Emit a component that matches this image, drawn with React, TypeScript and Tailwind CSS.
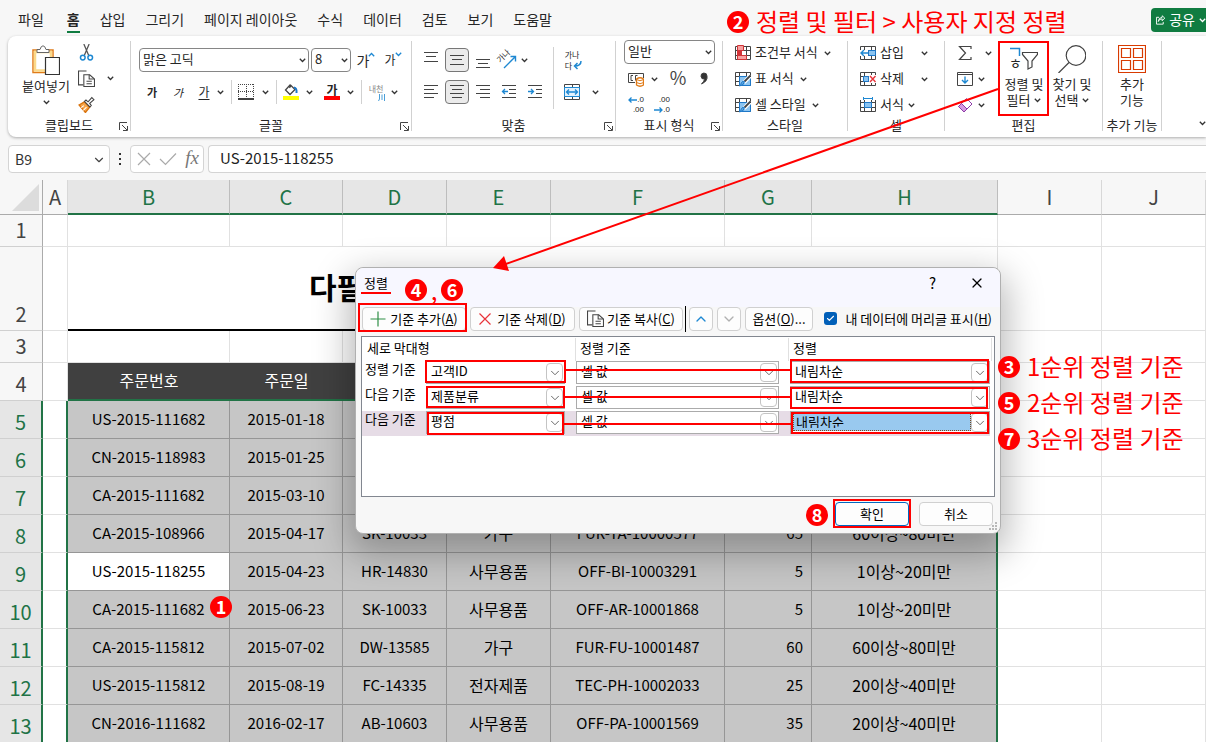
import React from 'react';
import { ChevronDown, ChevronUp, Check, X } from 'lucide-react';

const tabs = ['파일', '홈', '삽입', '그리기', '페이지 레이아웃', '수식', '데이터', '검토', '보기', '도움말'];

const columns = [
  { name: 'A', width: 'w-[25px]' },
  { name: 'B', width: 'w-[162px]' },
  { name: 'C', width: 'w-[113px]' },
  { name: 'D', width: 'w-[104px]' },
  { name: 'E', width: 'w-[104px]' },
  { name: 'F', width: 'w-[174px]' },
  { name: 'G', width: 'w-[87px]' },
  { name: 'H', width: 'w-[186px]' },
  { name: 'I', width: 'w-[104px]' },
  { name: 'J', width: '' },
];

const orders = [
  { row: 5, cells: ['US-2015-111682', '2015-01-18', '', '', '', '', ''] },
  { row: 6, cells: ['CN-2015-118983', '2015-01-25', '', '', '', '', ''] },
  { row: 7, cells: ['CA-2015-111682', '2015-03-10', '', '', '', '', ''] },
  { row: 8, cells: ['CA-2015-108966', '2015-04-17', 'SK-10033', '가구', 'FUR-TA-10000577', '65', '60이상~80미만'] },
  { row: 9, cells: ['US-2015-118255', '2015-04-23', 'HR-14830', '사무용품', 'OFF-BI-10003291', '5', '1이상~20미만'] },
  { row: 10, cells: ['CA-2015-111682', '2015-06-23', 'SK-10033', '사무용품', 'OFF-AR-10001868', '5', '1이상~20미만'] },
  { row: 11, cells: ['CA-2015-115812', '2015-07-02', 'DW-13585', '가구', 'FUR-FU-10001487', '60', '60이상~80미만'] },
  { row: 12, cells: ['US-2015-115812', '2015-08-19', 'FC-14335', '전자제품', 'TEC-PH-10002033', '25', '20이상~40미만'] },
  { row: 13, cells: ['CN-2016-111682', '2016-02-17', 'AB-10603', '사무용품', 'OFF-PA-10001569', '35', '20이상~40미만'] },
];

const sortLevels = [
  { label: '정렬 기준', field: '고객ID', on: '셀 값', order: '내림차순', active: false },
  { label: '다음 기준', field: '제품분류', on: '셀 값', order: '내림차순', active: false },
  { label: '다음 기준', field: '평점', on: '셀 값', order: '내림차순', active: true },
];

type Children = { children?: React.ReactNode; className?: string };

function Caret({ className = '', color = '#333' }: { className?: string; color?: string }) {
  return (
    <svg viewBox="0 0 7 5" className={`h-[5px] w-[7px] shrink-0 ${className}`} fill="none" stroke={color} strokeWidth="1.3">
      <path d="M0.8 0.8 3.5 3.5 6.2 0.8" />
    </svg>
  );
}

function Icon({ children, className = 'size-4' }: Children) {
  return (
    <svg viewBox="0 0 16 16" className={`shrink-0 ${className}`} fill="none" stroke="#444" strokeWidth="1">
      {children}
    </svg>
  );
}

function Tool({ label, children, className = '' }: Children & { label: string }) {
  return (
    <button type="button" aria-label={label} className={`flex shrink-0 items-center justify-center ${className}`}>
      {children}
    </button>
  );
}

function Group({ title, launcher, children, className = '' }: Children & { title: string; launcher?: boolean }) {
  return (
    <>
      <section className={`flex h-[94px] shrink-0 flex-col ${className}`}>
        <div className="flex h-[76px] items-start">{children}</div>
        <div className="relative h-4 text-center leading-4 whitespace-nowrap">
          {title}
          {launcher && (
            <button type="button" aria-label={`${title} 설정`} className="absolute top-[5px] right-0.5">
              <svg viewBox="0 0 9 9" className="size-[9px]" fill="none" stroke="#444">
                <path d="M0.5 8V0.5H8M3 3 8 8M8.5 4V8.5H4" />
              </svg>
            </button>
          )}
        </div>
      </section>
      <div className="h-[90px] w-px shrink-0 bg-[#d1d1d1]" />
    </>
  );
}

function Lines({ rows }: { rows: [number, number, number][] }) {
  return (
    <Icon>
      {rows.map(([y, from, to]) => (
        <path key={y} d={`M${from} ${y}.5H${to}`} />
      ))}
    </Icon>
  );
}

function CopyIcon() {
  return (
    <Icon className="size-[17px]">
      <path d="M5 14H0.5V1H8" />
      <path d="M5.5 4.5H11L15.5 8.5V15.5H5.5Z" fill="#fff" />
      <path d="M10.5 4.5V8.5H15M8 10.5H13M8 13H13" />
    </Icon>
  );
}

function ClipboardGroup() {
  return (
    <Group title="클립보드" launcher className="w-[122px]">
      <button type="button" className="ml-3 flex w-[52px] flex-col items-center pt-1">
        <svg viewBox="0 0 28 30" className="h-[30px] w-7" fill="none">
          <path d="M1 5H21V27.500H1Z" fill="#fff" stroke="#e07b18" strokeWidth="1.5" />
          <path d="M3 7H19V25.500H3Z" stroke="#fbd98a" strokeWidth="2.500" />
          <path d="M5 7.500V4.500H8Q9 0.800 11 0.800T14 4.500H17V7.500Z" fill="#fff" stroke="#666" />
          <path d="M13.500 12.500H27.500V29.500H13.500Z" fill="#fff" stroke="#333" strokeWidth="1.2" />
        </svg>
        <span className="mt-[3px] leading-4 whitespace-nowrap">붙여넣기</span>
        <Caret className="mt-1.5" />
      </button>
      <div className="ml-1.5 flex flex-col gap-[9px] pt-[3px]">
        <Tool label="잘라내기" className="size-[17px]">
          <Icon className="size-[17px]">
            <path d="M5.5 0 10 10.5M10.5 0 6 10.5" stroke="#555" strokeWidth="1.200" />
            <circle cx="4.5" cy="12.8" r="2.2" stroke="#1e88d2" strokeWidth="1.4" />
            <circle cx="11.5" cy="12.8" r="2.2" stroke="#1e88d2" strokeWidth="1.4" />
          </Icon>
        </Tool>
        <div className="flex items-center gap-3">
          <Tool label="복사" className="size-[17px]">
            <CopyIcon />
          </Tool>
          <Caret />
        </div>
        <Tool label="서식 복사" className="size-[17px]">
          <Icon className="size-[17px]">
            <path d="M1 8.5 6 5.5 11 10.5 7 15.5Z" fill="#f7a54a" stroke="#d9730d" strokeWidth="1.300" />
            <path d="M3 11 5.5 9M5 13.5 8 10.5" stroke="#fff" />
            <path d="M6 5 7.5 3.8 9.5 5.5 13 1.5 15 3.5 11 7 12.5 9 11.2 10.3Z" fill="#fff" stroke="#444" />
          </Icon>
        </Tool>
      </div>
    </Group>
  );
}

function RibbonSelect({ label, value, className = '' }: { label: string; value: string; className?: string }) {
  return (
    <div className={`relative shrink-0 ${className}`}>
      <select aria-label={label} className="block h-6 w-full appearance-none rounded border border-[#868686] bg-white pb-0.5 pl-[3px] leading-5">
        <option>{value}</option>
      </select>
      <Caret className="pointer-events-none absolute top-[10px] right-[3px]" />
    </div>
  );
}

function FontGroup() {
  return (
    <Group title="글꼴" launcher className="w-[280px]">
      <div className="flex flex-col pl-2">
        <div className="mt-[7px] flex h-6 items-center">
          <RibbonSelect label="글꼴 이름" value="맑은 고딕" className="w-[170px]" />
          <RibbonSelect label="글꼴 크기" value="8" className="ml-0.5 w-10" />
          <Tool label="글꼴 크게" className="ml-1.5 w-[18px] text-[14px]">
            가<Caret className="-mt-3 -ml-px rotate-180" color="#1e88d2" />
          </Tool>
          <Tool label="글꼴 작게" className="ml-2.5 w-[16px] text-[12px]">
            가<Caret className="-mt-3 -ml-px" color="#1e88d2" />
          </Tool>
        </div>
        <div className="mt-2 flex h-6 items-center">
          <Tool label="굵게" className="w-[26px] text-[11px] font-bold">가</Tool>
          <Tool label="기울임꼴" className="w-[26px] text-[11px] italic">가</Tool>
          <Tool label="밑줄" className="w-[26px] text-[12px] underline underline-offset-2">가</Tool>
          <Caret />
          <div className="ml-[7px] h-6 w-px bg-[#d1d1d1]" />
          <Tool label="테두리" className="ml-1.5 w-4">
            <Icon>
              <path d="M0.5 0V13M15.5 0V13M8.500 0V13M0 0.5H16M0 7.500H16" strokeDasharray="1 1" />
              <path d="M0 15H16" stroke="#000" strokeWidth="1.5" />
            </Icon>
          </Tool>
          <Caret className="ml-2" />
          <div className="ml-[7px] h-6 w-px bg-[#d1d1d1]" />
          <Tool label="채우기 색" className="ml-1.5 w-4">
            <Icon>
              <path d="M7.500 0.500 2.500 6 7 10.500 12 5.500 8 1.500 6.500 4" strokeWidth="1.300" />
              <path d="M11 3.500Q14 4 13.500 9" stroke="#1e78c8" strokeWidth="2" />
              <path d="M0 14H16" stroke="#ff0" strokeWidth="4" />
            </Icon>
          </Tool>
          <Caret className="ml-[7px]" />
          <Tool label="글꼴 색" className="ml-[11px] w-4 flex-col">
            <span className="h-3 text-[12px] leading-3 font-bold">가</span>
            <span className="h-1 w-4 bg-[#f00]" />
          </Tool>
          <Caret className="ml-[7px]" />
          <div className="ml-[7px] h-6 w-px bg-[#d1d1d1]" />
          <Tool label="윗주" className="ml-[5px] w-[18px] flex-col text-[8px] leading-[11px] text-[#888]">
            <span className="whitespace-nowrap">내천</span>
            <svg viewBox="0 0 7 7" className="size-[7px] self-end" fill="none" stroke="#4a9fd8">
              <path d="M1.5 0V5L0.5 7M4 0.500V6M6.500 0V7" />
            </svg>
          </Tool>
          <Caret className="ml-1.5" />
        </div>
      </div>
    </Group>
  );
}

function AlignGroup() {
  const pressed = 'size-6 rounded border border-[#777] bg-[#ebebeb]';
  return (
    <Group title="맞춤" launcher className="w-[203px]">
      <div className="flex flex-col gap-2 pt-[7px] pl-[5px]">
        <div className="flex h-6 items-center">
          <Tool label="위쪽 맞춤" className="w-7">
            <Lines rows={[[0, 1, 15], [4, 3, 13], [9, 1, 15]]} />
          </Tool>
          <Tool label="가운데 맞춤" className={pressed}>
            <Lines rows={[[3, 1, 15], [7, 3, 13], [12, 1, 15]]} />
          </Tool>
          <Tool label="아래쪽 맞춤" className="w-7">
            <Lines rows={[[7, 1, 15], [11, 3, 13], [15, 1, 15]]} />
          </Tool>
          <Tool label="방향" className="relative h-6 w-6">
            <span className="absolute top-0 -left-px -rotate-45 text-[8px] leading-4">가나</span>
            <svg viewBox="0 0 18 16" className="mt-1 h-4 w-[18px]" fill="none" stroke="#1e88d2" strokeWidth="1.4">
              <path d="M4 14 15 3M10.500 2.500H15.500V7.500" />
            </svg>
          </Tool>
          <Caret />
        </div>
        <div className="flex h-6 items-center">
          <Tool label="왼쪽 맞춤" className="w-7">
            <Lines rows={[[1, 1, 15], [5, 1, 11], [9, 1, 15], [13, 1, 11]]} />
          </Tool>
          <Tool label="가로 가운데 맞춤" className={pressed}>
            <Lines rows={[[1, 1, 15], [5, 3, 13], [9, 1, 15], [13, 3, 13]]} />
          </Tool>
          <Tool label="오른쪽 맞춤" className="w-7">
            <Lines rows={[[1, 1, 15], [5, 5, 15], [9, 1, 15], [13, 5, 15]]} />
          </Tool>
          <Tool label="내어쓰기" className="w-6">
            <Icon>
              <path d="M1 1.5H15M8 5.500H15M8 9.500H15M1 13.500H15" />
              <path d="M7 7.500H1.500M4 5 1.500 7.500 4 10" stroke="#1e88d2" strokeWidth="1.3" />
            </Icon>
          </Tool>
          <Tool label="들여쓰기" className="w-7">
            <Icon>
              <path d="M1 1.5H15M9 5.500H15M9 9.500H15M1 13.500H15" />
              <path d="M1 7.500H6.500M4 5 6.500 7.500 4 10" stroke="#1e88d2" strokeWidth="1.3" />
            </Icon>
          </Tool>
        </div>
      </div>
      <div className="mt-1.5 ml-1 h-[62px] w-px shrink-0 bg-[#d1d1d1]" />
      <div className="flex flex-col gap-2 pt-[7px] pl-2">
        <Tool label="텍스트 줄 바꿈" className="relative h-6 w-5">
          <span className="text-left text-[8px] leading-[11px]">가나<br />다</span>
          <svg viewBox="0 0 9 9" className="absolute right-0 bottom-0.5 size-[9px]" fill="none" stroke="#1e88d2" strokeWidth="1.5">
            <path d="M8 0Q8 5 1.5 5M4.5 2 1.5 5 4.5 8" />
          </svg>
        </Tool>
        <div className="flex h-6 items-center">
          <Tool label="병합하고 가운데 맞춤" className="w-5">
            <Icon>
              <path d="M0.5 0.5H15.5V15.5H0.5ZM8.500 0.5V3.5M8.500 12.5V15.5" />
              <path d="M0.5 3.5H15.5V12.5H0.5Z" fill="#e3f1fc" stroke="#1e88d2" />
              <path d="M3 8H13M5 5.5 2.5 8 5 10.5M11 5.5 13.5 8 11 10.5" stroke="#1e88d2" strokeWidth="1.3" />
            </Icon>
          </Tool>
          <Caret className="ml-2.5" />
        </div>
      </div>
    </Group>
  );
}

function NumberGroup() {
  const decimals = "relative w-4 flex-col text-right font-['Liberation_Sans',sans-serif] text-[8px] leading-[10px]";
  return (
    <Group title="표시 형식" launcher className="w-[106px]">
      <div className="flex flex-col pl-2">
        <RibbonSelect label="표시 형식" value="일반" className="-mt-px w-[91px]" />
        <div className="mt-[3px] flex h-6 items-center">
          <Tool label="회계 표시 형식" className="ml-1 w-4">
            <Icon>
              <path d="M15.500 7V2.5H0.5V11.5H7M5 4.500H3V9.500H5M9.500 4.500H7.500V9.500" />
              <path d="M8.5 8Q12 5.500 15.5 8V14Q12 16.5 8.5 14Z" fill="#fff" stroke="#e07b18" strokeWidth="1.3" />
              <path d="M8.5 8.500Q12 11 15.5 8.500M8.5 11.500Q12 14 15.5 11.500" stroke="#e07b18" />
            </Icon>
          </Tool>
          <Caret className="ml-[7px]" />
          <Tool label="백분율 스타일" className="ml-3 w-4 pb-1 text-[18px] leading-5 text-[#444]">%</Tool>
          <Tool label="쉼표 스타일" className="ml-2.5 w-4">
            <Icon>
              <path d="M11 5Q12 10 5.5 13 8.5 10 8.5 8A3 3 0 1 1 11 5Z" fill="#333" />
            </Icon>
          </Tool>
        </div>
        <div className="mt-0.5 flex h-6 items-center gap-2.5 pl-1">
          <Tool label="자릿수 늘림" className={decimals}>
            <span className="w-full">.0</span>
            <span className="w-full">.00</span>
            <svg viewBox="0 0 9 6" className="absolute top-0.5 left-0 h-1.5 w-[9px]" fill="none" stroke="#1e88d2" strokeWidth="1.3">
              <path d="M9 3H1M3.5 0.5 1 3 3.5 5.5" />
            </svg>
          </Tool>
          <Tool label="자릿수 줄임" className={decimals}>
            <span className="w-full">.00</span>
            <span className="w-full">.0</span>
            <svg viewBox="0 0 9 6" className="absolute bottom-0.5 left-0 h-1.5 w-[9px]" fill="none" stroke="#1e88d2" strokeWidth="1.3">
              <path d="M0 3H8M5.5 0.5 8 3 5.5 5.5" />
            </svg>
          </Tool>
        </div>
      </div>
    </Group>
  );
}

function GridIcon({ children }: Children) {
  return (
    <Icon>
      <path d="M0.5 1.5H15.5V14.5H0.5ZM0.5 5.5H15.5M0.5 10.5H15.5M4.5 1.5V14.5M11.5 1.5V14.5" />
      {children}
    </Icon>
  );
}

function Brush() {
  return (
    <>
      <path d="M4.5 5.5H15.5V14.5H4.5Z" fill="#8cc4f0" stroke="#1e78c8" />
      <path d="M15.5 4.5 9 11.5" stroke="#fff" strokeWidth="4" />
      <path d="M15.5 4.5 9.5 10.5" stroke="#444" strokeWidth="1.8" />
      <path d="M9.5 10.5Q9 14.5 4.5 15 6 13.5 6.5 11.5 8 9.5 9.5 10.5Z" fill="#5ba7e0" stroke="#1e78c8" />
    </>
  );
}

function StyleGroup() {
  const items = [
    {
      text: '조건부 서식',
      art: (
        <>
          <path d="M2.500 0.500H8.500V5.500H2.500ZM2.500 10.500H11.500V14.500H2.500Z" fill="#f7a0a0" stroke="#d13438" />
          <path d="M2.500 5.500H6.500V10.500H2.500Z" fill="#d13438" stroke="#d13438" />
          <path d="M7.500 6H11V10H7.500Z" fill="#fff" stroke="none" />
        </>
      ),
    },
    { text: '표 서식', art: <Brush /> },
    { text: '셀 스타일', art: <Brush /> },
  ];
  return (
    <Group title="스타일" className="w-[124px]">
      <div className="flex flex-col gap-0.5 pl-3">
        {items.map((item) => (
          <button key={item.text} type="button" className="flex h-6 items-center">
            <GridIcon>{item.art}</GridIcon>
            <span className="ml-1 pb-0.5 whitespace-nowrap">{item.text}</span>
            <Caret className="ml-1.5" />
          </button>
        ))}
      </div>
    </Group>
  );
}

function CellGroup() {
  const items = [
    {
      text: '삽입',
      caret: 'ml-[17px]',
      art: (
        <>
          <path d="M0 5H8V11H0Z" fill="#fff" stroke="none" />
          <path d="M8.5 5.5H15.5V10.5H8.5Z" fill="#8cc4f0" stroke="#1e78c8" />
          <path d="M8 8H1M4 5 1 8 4 11" stroke="#1e88d2" strokeWidth="1.4" />
        </>
      ),
    },
    {
      text: '삭제',
      caret: 'ml-[17px]',
      art: (
        <>
          <path d="M9 4H16V12H9Z" fill="#fff" stroke="none" />
          <path d="M3.5 5.5H8.5V10.5H3.5Z" fill="#8cc4f0" stroke="#1e78c8" />
          <path d="M10 5 15.5 11M15.5 5 10 11" stroke="#e8333a" strokeWidth="1.4" />
        </>
      ),
    },
    {
      text: '서식',
      caret: 'ml-1',
      art: (
        <>
          <path d="M4.5 5.5H11.5V10.5H4.5Z" fill="#8cc4f0" stroke="#1e78c8" />
          <path d="M0 0H16V3H0Z" fill="#fff" stroke="none" />
          <path d="M3.500 1.500H12.500M3.500 0V3M12.500 0V3" stroke="#1e88d2" />
        </>
      ),
    },
  ];
  return (
    <Group title="셀" className="w-[96px]">
      <div className="flex flex-col gap-0.5 pl-3">
        {items.map((item) => (
          <button key={item.text} type="button" className="flex h-6 items-center">
            <GridIcon>{item.art}</GridIcon>
            <span className="ml-1 pb-0.5 whitespace-nowrap">{item.text}</span>
            <Caret className={item.caret} />
          </button>
        ))}
      </div>
    </Group>
  );
}

function EditGroup() {
  return (
    <Group title="편집" className="w-[157px]">
      <div className="flex flex-col gap-0.5 pl-3">
        <button type="button" aria-label="자동 합계" className="flex h-6 items-center">
          <Icon>
            <path d="M14 4V1.5H2.5L8.5 8 2.5 14.5H14V12" strokeWidth="1.2" />
          </Icon>
          <Caret className="ml-3" />
        </button>
        <button type="button" aria-label="채우기" className="flex h-6 items-center">
          <Icon>
            <path d="M0.5 1.5H15.5V14.5H0.5ZM0.5 3.500H15.5" />
            <path d="M8 5.5V12M5 9 8 12 11 9" stroke="#1e88d2" strokeWidth="1.4" />
          </Icon>
          <Caret className="ml-[5px]" />
        </button>
        <button type="button" aria-label="지우기" className="flex h-6 items-center">
          <Icon>
            <path d="M9.5 1.5 15 7 7 15 1.5 9.5Z" stroke="#8e3ba8" fill="#fff" />
            <path d="M4.5 6.5 10 12 7 15 1.5 9.5Z" fill="#d59ae0" stroke="#8e3ba8" />
          </Icon>
          <Caret className="ml-[5px]" />
        </button>
      </div>
      <button type="button" className="ml-[7px] flex w-[50px] flex-col items-center pt-1.5">
        <div className="relative h-[26px] w-7">
          <svg viewBox="0 0 28 26" className="h-[26px] w-7" fill="none">
            <path d="M0 1.5H9.5V9" stroke="#1e88d2" strokeWidth="1.5" />
            <path d="M12.5 5.5H27.5V7.5L22 14V20L18 22V14L12.5 7.5Z" stroke="#444" strokeWidth="1.2" />
          </svg>
          <span className="absolute top-2.5 -left-px text-[14px] leading-[13px]">ㅎ</span>
        </div>
        <span className="mt-[3px] text-center leading-4 whitespace-nowrap">정렬 및</span>
        <span className="flex items-center gap-1 leading-4">필터 <Caret /></span>
      </button>
      <button type="button" className="flex w-[46px] flex-col items-center pt-1">
        <svg viewBox="0 0 28 28" className="size-7" fill="none" stroke="#444" strokeWidth="1.2">
          <circle cx="18" cy="10.5" r="9.8" />
          <path d="M11 17.5 0.5 28" />
        </svg>
        <span className="mt-[3px] text-center leading-4 whitespace-nowrap">찾기 및</span>
        <span className="flex items-center gap-1 leading-4">선택 <Caret /></span>
      </button>
    </Group>
  );
}

function Ribbon() {
  return (
    <div className="ml-2 flex h-[101px] shrink-0 items-start overflow-hidden rounded-l-lg bg-white pt-[5px] text-[13px] text-[#262626] shadow-[0_1px_3px_rgba(0,0,0,0.3)]">
      <ClipboardGroup />
      <FontGroup />
      <AlignGroup />
      <NumberGroup />
      <StyleGroup />
      <CellGroup />
      <EditGroup />
      <Group title="추가 기능" className="w-[58px]">
        <button type="button" className="flex w-full flex-col items-center pt-1">
          <svg viewBox="0 0 28 28" className="size-7" fill="none" stroke="#d83b01" strokeWidth="1.2">
            <path d="M0.5 0.5H27.5V27.5H0.5ZM3.5 3.5H12.5V12.5H3.5ZM15.5 3.5H24.5V12.5H15.5ZM3.5 15.5H12.5V24.5H3.5ZM15.5 15.5H24.5V24.5H15.5Z" />
          </svg>
          <span className="mt-[3px] leading-4">추가</span>
          <span className="leading-4">기능</span>
        </button>
      </Group>
      <button type="button" aria-label="리본 메뉴 접기" className="mt-20 ml-auto">
        <Caret />
      </button>
    </div>
  );
}

function FormulaBar() {
  return (
    <div className="mt-2 flex h-7 shrink-0 items-stretch">
      <div className="relative ml-2 w-[102px]">
        <input aria-label="이름 상자" defaultValue="B9" className="h-full w-full rounded border border-[#d4d4d4] bg-white pl-1.5 text-[14px] text-[#333]" />
        <ChevronDown className="pointer-events-none absolute top-2 right-1 size-3.5 text-[#444]" strokeWidth={2} />
      </div>
      <div className="flex w-5 flex-col items-center justify-center gap-[3px]">
        <span className="size-0.5 bg-[#333]" />
        <span className="size-0.5 bg-[#333]" />
        <span className="size-0.5 bg-[#333]" />
      </div>
      <div className="flex w-[74px] items-center justify-between rounded border border-[#d4d4d4] bg-white px-1 text-[#aaa]">
        <Tool label="취소">
          <svg viewBox="0 0 14 14" className="ml-0.5 size-3.5" fill="none" stroke="currentColor" strokeWidth="1.2">
            <path d="M1 1 13 13M13 1 1 13" />
          </svg>
        </Tool>
        <Tool label="입력">
          <svg viewBox="0 0 18 14" className="h-3.5 w-[18px]" fill="none" stroke="currentColor" strokeWidth="1.2">
            <path d="M1 7 6.500 12.500 17 1.500" />
          </svg>
        </Tool>
        <Tool label="함수 삽입" className="pb-0.5 font-['Liberation_Serif',serif] text-[19px] leading-5 text-[#777] italic">fx</Tool>
      </div>
      <input aria-label="수식 입력줄" defaultValue="US-2015-118255" className="ml-1 min-w-0 flex-1 rounded-l border border-r-0 border-[#d4d4d4] bg-white pb-0.5 pl-[11px] text-[15px] text-[#222]" />
    </div>
  );
}

function RowNumber({ n, selected }: { n: number; selected?: boolean }) {
  return (
    <th
      scope="row"
      className={`border-b border-b-[#d0d0d0] p-0 pb-0.5 align-bottom text-[20px] leading-[29px] font-normal ${selected ? 'border-r-2 border-r-[#217346] bg-[#e6e6e6] text-[#217346]' : 'border-r border-r-[#ababab] bg-[#f7f7f7] text-[#444]'}`}
    >
      {n}
    </th>
  );
}

const gridCell = 'border-r border-b border-[#e1e1e1] bg-white';

function BlankRow({ n }: { n: number }) {
  return (
    <tr className="h-8">
      <RowNumber n={n} />
      {columns.map((col) => (
        <td key={col.name} className={gridCell} />
      ))}
    </tr>
  );
}

function Sheet() {
  return (
    <table className="mt-[7px] w-full shrink-0 table-fixed border-separate border-spacing-0 text-black">
      <colgroup>
        <col className="w-[43px]" />
        {columns.map((col) => (
          <col key={col.name} className={col.width} />
        ))}
      </colgroup>
      <thead>
        <tr className="h-[35px]">
          <td className="border-r border-b border-[#ababab] bg-[#f7f7f7] p-0">
            <svg viewBox="0 0 27 27" className="ml-3 size-[27px]">
              <path d="M27 0V27H0Z" fill="#dcdcdc" />
            </svg>
          </td>
          {columns.map((col, i) => (
            <th
              key={col.name}
              scope="col"
              className={`border-r p-0 text-[20px] leading-8 font-normal ${i > 0 && i < 8 ? 'border-b-2 border-r-[#bdbdbd] border-b-[#217346] bg-[#e6e6e6] text-[#217346]' : 'border-b border-r-[#d8d8d8] border-b-[#ababab] bg-[#f7f7f7] text-[#444]'}`}
            >
              {col.name}
            </th>
          ))}
        </tr>
      </thead>
      <tbody>
        <BlankRow n={1} />
        <tr className="h-[84px]">
          <RowNumber n={2} />
          <td className={gridCell} />
          <td colSpan={7} className="border-r border-b-2 border-r-[#e1e1e1] border-b-black bg-white p-0 pb-1 pl-[241px] text-[30px] leading-10 font-bold">
            다필
          </td>
          <td className={gridCell} />
          <td className={gridCell} />
        </tr>
        <BlankRow n={3} />
        <tr className="h-[38px]">
          <RowNumber n={4} />
          <td className={gridCell} />
          {['주문번호', '주문일', '', '', '', '', ''].map((name, i) => (
            <td key={i} className="border-b-2 border-[#217346] bg-[#404040] p-0 pb-0.5 text-center text-[16px] leading-6 text-white">
              {name}
            </td>
          ))}
          <td className={gridCell} />
          <td className={gridCell} />
        </tr>
        {orders.map((order) => (
          <tr key={order.row} className="h-[38px]">
            <RowNumber n={order.row} selected />
            <td className="border-r-2 border-b border-r-[#217346] border-b-[#e1e1e1] bg-white" />
            {order.cells.map((cell, i) => (
              <td
                key={i}
                className={`border-b border-b-[#969696] p-0 pb-0.5 leading-6 ${i === 6 ? 'border-r-2 border-r-[#217346]' : 'border-r border-r-[#969696]'} ${order.row === 9 && i === 0 ? 'bg-white' : 'bg-[#c6c6c6]'} ${i === 5 ? 'pr-2 text-right' : 'text-center'} ${i === 3 || i === 6 ? 'text-[16px]' : 'text-[15px]'}`}
              >
                {cell}
              </td>
            ))}
            <td className={gridCell} />
            <td className={gridCell} />
          </tr>
        ))}
      </tbody>
    </table>
  );
}

function DialogButton({ children, className = '', primary }: Children & { primary?: boolean }) {
  return (
    <button
      type="button"
      className={`flex h-6 shrink-0 items-center justify-center rounded border bg-[#fdfdfd] pb-px whitespace-nowrap ${primary ? 'border-[#0067c0]' : 'border-[#d0d0d0]'} ${className}`}
    >
      {children}
    </button>
  );
}

function LevelSelect({ label, value, active, className = '' }: { label: string; value: string; active?: boolean; className?: string }) {
  return (
    <div className={`relative h-[23px] shrink-0 border border-[#ababab] bg-white px-0.5 pt-px ${className}`}>
      <select
        aria-label={label}
        className={`block h-[18px] appearance-none pb-0.5 pl-0.5 leading-4 ${active ? 'w-[178px] border border-dotted border-[#7a4a20] bg-[#99c9ef]' : 'w-full bg-white'}`}
      >
        <option>{value}</option>
      </select>
      <span className="pointer-events-none absolute inset-y-px right-px flex w-[17px] items-center justify-center rounded-sm border border-[#c4c4c4] bg-white">
        <ChevronDown className="size-3.5 shrink-0 text-[#555]" strokeWidth={1.5} />
      </span>
    </div>
  );
}

function SortDialog() {
  return (
    <div role="dialog" aria-label="정렬" className="absolute top-[267px] left-[355px] flex h-[267px] w-[646px] flex-col rounded-lg border border-[#b0b0b0] bg-[#f7f7f7] text-[13px] text-black shadow-[0_14px_36px_6px_rgba(0,0,0,0.28)]">
      <div className="flex h-[30px] items-center rounded-t-lg bg-[#f7f7ff] pr-[15px] pl-2">
        <span className="-mx-[3px] border-b-2 border-[#f00] px-[3px] leading-[19px]">정렬</span>
        <button type="button" aria-label="도움말" className="ml-auto text-[15px]">?</button>
        <button type="button" aria-label="닫기" className="ml-[33px]">
          <X className="size-4" strokeWidth={1.8} />
        </button>
      </div>
      <div className="h-[9px] bg-[#f7f7ff]" />
      <div className="flex h-6 items-center pr-2 pl-1.5">
        <DialogButton className="w-[104px] gap-1">
          <svg viewBox="0 0 16 16" className="size-4" stroke="#2f8f46" strokeWidth="1.2">
            <path d="M8 0.5V15.5M0.5 8H15.5" />
          </svg>
          <span>기준 추가(<u>A</u>)</span>
        </DialogButton>
        <DialogButton className="ml-1 w-[105px] gap-1.5">
          <svg viewBox="0 0 12 12" className="size-3" stroke="#e8333a" strokeWidth="1.2">
            <path d="M0.5 0.5 11.5 11.5M11.5 0.5 0.5 11.5" />
          </svg>
          <span>기준 삭제(<u>D</u>)</span>
        </DialogButton>
        <DialogButton className="ml-1 w-[104px] gap-[3px]">
          <CopyIcon />
          <span>기준 복사(<u>C</u>)</span>
        </DialogButton>
        <div className="mx-0.5 h-[26px] w-px bg-black" />
        <DialogButton className="ml-px w-6"><ChevronUp className="size-4 text-[#1e88d2]" strokeWidth={2} /></DialogButton>
        <DialogButton className="ml-1 w-6"><ChevronDown className="size-4 text-[#b0b0b0]" strokeWidth={2} /></DialogButton>
        <DialogButton className="ml-1 w-[68px]"><span>옵션(<u>O</u>)...</span></DialogButton>
        <label className="ml-auto flex items-center gap-2 pb-px whitespace-nowrap">
          <span className="relative size-[13px]">
            <input type="checkbox" defaultChecked className="block size-[13px] appearance-none rounded-[3px] bg-[#005fb8]" />
            <Check className="pointer-events-none absolute inset-0.5 size-[9px] text-white" strokeWidth={3} />
          </span>
          <span>내 데이터에 머리글 표시(<u>H</u>)</span>
        </label>
      </div>
      <div className="mx-[5px] mt-[5px] h-[161px] border border-[#828790] bg-white">
        <div className="flex h-6 pt-px leading-5">
          <div className="w-[214px] border-r border-[#e0e0e0] pl-[5px]">세로 막대형</div>
          <div className="w-[213px] border-r border-[#e0e0e0] pl-1">정렬 기준</div>
          <div className="w-[203px] border-r border-[#e0e0e0] pl-1">정렬</div>
        </div>
        {sortLevels.map((level, i) => (
          <div key={i} className={`mr-1 flex h-[25px] items-start pl-[3px] ${level.active ? 'bg-[#e6dce6]' : ''}`}>
            <span className="w-[62px] leading-[15px]">{level.label}</span>
            <LevelSelect label={`${i + 1}번째 열`} value={level.field} className="w-[139px]" />
            <LevelSelect label={`${i + 1}번째 정렬 기준`} value={level.on} className="ml-[11px] w-[203px]" />
            <LevelSelect label={`${i + 1}번째 정렬 순서`} value={level.order} active={level.active} className="ml-[11px] w-[200px]" />
          </div>
        ))}
      </div>
      <div className="mt-[5px] flex justify-end gap-2.5 pr-[7px]">
        <DialogButton primary className="w-[74px]">확인</DialogButton>
        <DialogButton className="w-[74px]">취소</DialogButton>
      </div>
      <svg viewBox="0 0 9 9" className="absolute right-0.5 bottom-0.5 size-[9px]" fill="#b8b8b8">
        <path d="M6 0H8V2H6ZM3 3H5V5H3ZM6 3H8V5H6ZM0 6H2V8H0ZM3 6H5V8H3ZM6 6H8V8H6Z" />
      </svg>
    </div>
  );
}

function Step({ n, className = '' }: { n: number; className?: string }) {
  return (
    <span className={`flex size-[22px] shrink-0 items-center justify-center rounded-full bg-[#f00] pb-0.5 text-[18px] leading-5 font-bold text-white ${className}`}>
      {n}
    </span>
  );
}

const frames = [
  'top-[41px] left-[998px] h-[75px] w-[51px]',
  'top-[303px] left-[358px] h-[29px] w-[109px]',
  'top-[360px] left-[425px] h-[23px] w-[141px]',
  'top-[386px] left-[426px] h-[22px] w-[139px]',
  'top-[412px] left-[427px] h-[23px] w-[137px]',
  'top-[359px] left-[790px] h-[24px] w-[199px]',
  'top-[387px] left-[790px] h-[22px] w-[198px]',
  'top-[412px] left-[791px] h-[22px] w-[198px]',
  'top-[499px] left-[833px] h-[29px] w-[78px]',
];

function Annotations() {
  return (
    <div className="pointer-events-none absolute inset-0 text-[24px] leading-8 whitespace-nowrap text-[#f00]">
      <svg className="absolute inset-0 h-full w-full" stroke="#f00" strokeWidth="2" fill="#f00">
        <path d="M998 89 503 265" />
        <path d="M493 268 504 256 509 271Z" stroke="none" />
        <path d="M566 370H790M565 397H792M564 424H791" fill="none" />
      </svg>
      {frames.map((frame) => (
        <div key={frame} className={`absolute border-2 border-[#f00] ${frame}`} />
      ))}
      <div className="absolute top-[5px] left-[727px] flex items-center gap-[7px]">
        <Step n={2} />
        <span className="pb-0.5">정렬 및 필터 &gt; 사용자 지정 정렬</span>
      </div>
      <div className="absolute top-[274px] left-[405px] flex items-center">
        <Step n={4} />
        <span className="w-[14px] text-center">,</span>
        <Step n={6} />
      </div>
      <div className="absolute top-[350px] left-[998px] flex flex-col gap-0.5">
        <div className="flex items-center gap-[7px]"><Step n={3} /><span className="pb-0.5">1순위 정렬 기준</span></div>
        <div className="flex items-center gap-[7px]"><Step n={5} /><span className="pb-0.5">2순위 정렬 기준</span></div>
        <div className="flex items-center gap-[7px]"><Step n={7} /><span className="pb-0.5">3순위 정렬 기준</span></div>
      </div>
      <Step n={8} className="absolute top-[504px] left-[806px]" />
      <Step n={1} className="absolute top-[596px] left-[210px]" />
    </div>
  );
}

export default function App() {
  return (
    <main className="relative flex h-screen flex-col overflow-hidden bg-[#f7f7f7] font-['Noto_Sans_CJK_KR','Noto_Sans',sans-serif]">
      <header className="flex h-9 shrink-0 items-center pt-1 pl-[18px]">
        <nav className="flex gap-5 text-[14px] leading-6 whitespace-nowrap text-[#262626]">
          {tabs.map((tab) => (
            <button key={tab} type="button" className={tab === '홈' ? 'ml-[3px] border-b-2 border-[#107c41] font-bold' : 'border-b-2 border-transparent'}>
              {tab}
            </button>
          ))}
        </nav>
        <button type="button" className="ml-auto flex h-6 w-[55px] shrink-0 items-center gap-1 rounded-l bg-[#107c41] pl-[5px] text-[14px] whitespace-nowrap text-white">
          <svg viewBox="0 0 12 12" className="size-3" fill="none" stroke="#fff" strokeWidth="1.2">
            <path d="M4 2.5H0.6V11.4H9.4V8.5M3 8Q3.5 4.5 8 4.5V7L11.4 3.5 8 0.5V2.5Q3 3 3 8Z" />
          </svg>
          <span className="pb-0.5">공유</span>
          <Caret color="#fff" />
        </button>
      </header>
      <Ribbon />
      <FormulaBar />
      <Sheet />
      <SortDialog />
      <Annotations />
    </main>
  );
}
